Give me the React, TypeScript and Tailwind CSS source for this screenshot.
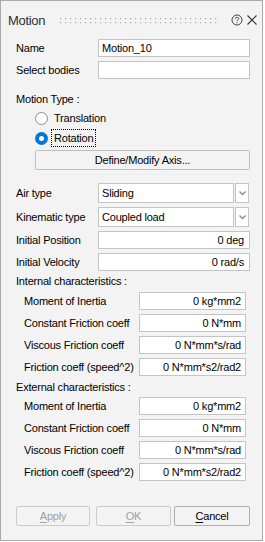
import { type FC, type ReactNode } from 'react'

const Box: FC<{ value?: string; className?: string }> = ({ value, className = '' }) => (
  <div className={`h-[18px] bg-white border border-[#c4c4c4] flex items-center ${className}`}>
    {value}
  </div>
)

const Combo: FC<{ value: string }> = ({ value }) => (
  <div className="flex h-[20px]">
    <div className="w-[136px] h-full bg-white border border-[#c4c4c4] flex items-center pl-[3px]">{value}</div>
    <div className="w-[14px] ml-[1px] h-full bg-white border border-[#c4c4c4] flex items-center justify-center">
      <svg width="7" height="5" viewBox="0 0 7 5">
        <path d="M0.5 0.5 L3.5 3.5 L6.5 0.5" fill="none" stroke="#8a8a8a" strokeWidth="1.4" />
      </svg>
    </div>
  </div>
)

const MainRow: FC<{ label: string; children: ReactNode; mt: string }> = ({ label, children, mt }) => (
  <div className={`flex items-center ${mt}`}>
    <span className="w-[82px]">{label}</span>
    <div className="w-[152px]">{children}</div>
  </div>
)

const SubRow: FC<{ label: string; value: string; mt: string }> = ({ label, value, mt }) => (
  <div className={`flex items-center pl-[8px] ${mt}`}>
    <span className="w-[115px]">{label}</span>
    <Box value={value} className="w-[107px] justify-end pr-[4px]" />
  </div>
)

const Radio: FC<{ checked?: boolean }> = ({ checked }) =>
  checked ? (
    <span className="w-[13px] h-[13px] rounded-full bg-[#0078d7] flex items-center justify-center">
      <span className="w-[5px] h-[5px] rounded-full bg-white" />
    </span>
  ) : (
    <span className="w-[13px] h-[13px] rounded-full bg-white border border-[#8c8c8c]" />
  )

const Btn: FC<{ u: string; rest: string; w: string; disabled?: boolean; className?: string }> = ({ u, rest, w, disabled, className = '' }) => (
  <div
    className={`h-[20px] ${w} border rounded-[2px] flex items-center justify-center ${
      disabled ? 'border-[#cccccc] text-[#a0a0a0] bg-[#f3f3f3]' : 'border-[#adadad] text-black bg-[#f3f3f3]'
    } ${className}`}
  >
    <span>
      <span className="underline underline-offset-2">{u}</span>
      {rest}
    </span>
  </div>
)

export default function App() {
  return (
    <div className="bg-white w-[265px] h-[542px]">
      <div className="w-[263px] h-[541px] border border-[#a9a9a9] bg-[#f3f3f3] font-['Liberation_Sans',Arial,sans-serif] text-[11px] tracking-[-0.2px] text-black leading-none">
        {/* title bar */}
        <div className="h-[38px] flex items-center pl-[7px]">
          <span className="text-[13px] tracking-[-0.3px] text-[#303030] w-[52px]">Motion</span>
          <svg width="160" height="6" viewBox="0 0 160 6" className="mt-[2px]">
            {Array.from({ length: 32 }).map((_, i) => (
              <g key={i} fill="#a8a8a8">
                <rect x={i * 5} y={0} width="1.2" height="1.2" />
                <rect x={i * 5} y={4} width="1.2" height="1.2" />
              </g>
            ))}
          </svg>
          <svg width="12" height="12" viewBox="0 0 12 12" className="ml-[11px] mt-[-1px]">
            <circle cx="6" cy="6" r="5" fill="none" stroke="#444" strokeWidth="1" />
            <path d="M4.3 4.7 C4.3 2.9 7.7 2.9 7.7 4.6 C7.7 5.8 6 5.7 6 7.2" fill="none" stroke="#444" strokeWidth="1" />
            <rect x="5.5" y="8.2" width="1" height="1" fill="#444" />
          </svg>
          <svg width="10" height="10" viewBox="0 0 10 10" className="ml-[4px] mt-[-1px]">
            <path d="M0.5 0.5 L9.5 9.5 M9.5 0.5 L0.5 9.5" stroke="#333" strokeWidth="1.1" />
          </svg>
        </div>

        <div className="pl-[15px]">
          <MainRow label="Name" mt="">
            <Box value="Motion_10" className="pl-[3px]" />
          </MainRow>
          <MainRow label="Select bodies" mt="mt-[4px]">
            <Box />
          </MainRow>

          <div className="h-[16px] flex items-center mt-[12px]">Motion Type :</div>
          <div className="h-[16px] flex items-center mt-[3px] pl-[19px] gap-[6px]">
            <Radio />
            <span>Translation</span>
          </div>
          <div className="h-[18px] flex items-center mt-[3px] pl-[19px] gap-[3px]">
            <Radio checked />
            <span className="h-[18px] px-[2px] border border-dotted border-black flex items-center">Rotation</span>
          </div>
          <div className="ml-[19px] mt-[3px] w-[215px] h-[20px] border border-[#c0c0c0] rounded-[2px] flex items-center justify-center">
            Define/Modify Axis...
          </div>

          <MainRow label="Air type" mt="mt-[13px]">
            <Combo value="Sliding" />
          </MainRow>
          <MainRow label="Kinematic type" mt="mt-[4px]">
            <Combo value="Coupled load" />
          </MainRow>
          <MainRow label="Initial Position" mt="mt-[4px]">
            <Box value="0 deg" className="justify-end pr-[5px]" />
          </MainRow>
          <MainRow label="Initial Velocity" mt="mt-[4px]">
            <Box value="0 rad/s" className="justify-end pr-[5px]" />
          </MainRow>

          <div className="h-[16px] flex items-center mt-[2px]">Internal characteristics :</div>
          <SubRow label="Moment of Inertia" value="0 kg*mm2" mt="mt-[3px]" />
          <SubRow label="Constant Friction coeff" value="0 N*mm" mt="mt-[4px]" />
          <SubRow label="Viscous Friction coeff" value="0 N*mm*s/rad" mt="mt-[4px]" />
          <SubRow label="Friction coeff (speed^2)" value="0 N*mm*s2/rad2" mt="mt-[4px]" />

          <div className="h-[16px] flex items-center mt-[3px]">External characteristics :</div>
          <SubRow label="Moment of Inertia" value="0 kg*mm2" mt="mt-[2px]" />
          <SubRow label="Constant Friction coeff" value="0 N*mm" mt="mt-[4px]" />
          <SubRow label="Viscous Friction coeff" value="0 N*mm*s/rad" mt="mt-[4px]" />
          <SubRow label="Friction coeff (speed^2)" value="0 N*mm*s2/rad2" mt="mt-[4px]" />

          <div className="flex mt-[25px]">
            <Btn u="A" rest="pply" w="w-[74px]" disabled />
            <Btn u="O" rest="K" w="w-[75px]" disabled className="ml-[6px]" />
            <Btn u="C" rest="ancel" w="w-[76px]" className="ml-[3px]" />
          </div>
        </div>
      </div>
    </div>
  )
}
